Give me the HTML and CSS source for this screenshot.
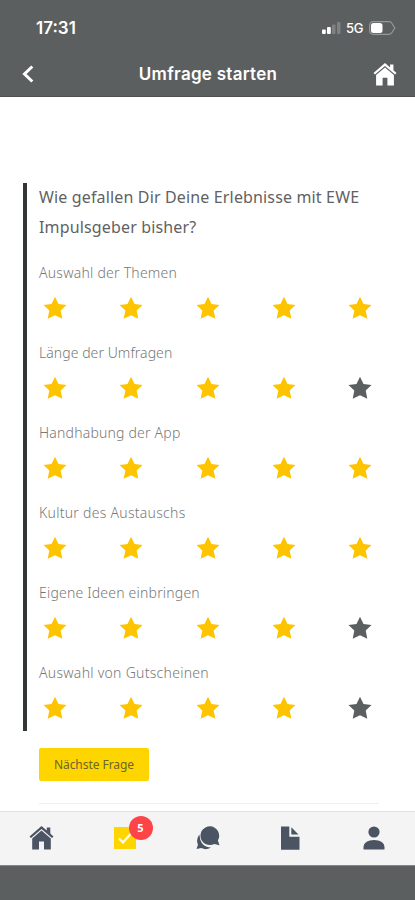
FILE: index.html
```html
<!DOCTYPE html>
<html lang="de">
<head>
<meta charset="utf-8">
<meta name="viewport" content="width=device-width, initial-scale=1">
<title>Umfrage starten</title>
<link rel="stylesheet" href="styles.css">
</head>
<body>
<svg class="defs" aria-hidden="true">
  <symbol id="star" viewBox="0 0 24 24"><path d="M12 .7l3.500 7.200 8 1.100-5.800 5.500 1.600 8.300L12 19.200l-7.300 3.600 1.600-8.300L.5 9l8-1.100z"/></symbol>
  <symbol id="home" viewBox="0 0 24 24"><path d="M12 0L0 10.400l1.500 1.700L12 3.100l10.500 9 1.500-1.700-3.200-2.800V1.500h-3.500v3.100z"/><path d="M12 4.600L2.700 12.600V23.500H9.500V15.500h5v8h6.800V12.600z"/></symbol>
</svg>
<div class="app">
  <header class="top">
    <div class="status">
      <span class="time">17:31</span>
      <span class="signals">
        <svg width="19" height="12" viewBox="0 0 19 12" fill="#fff"><rect x="0" y="7.500" width="3.800" height="4.500" rx="1"/><rect x="5" y="5" width="3.800" height="7" rx="1"/><rect x="10" y="2.500" width="3.500" height="9.500" rx="1" opacity=".22"/><rect x="15" y="0" width="3.500" height="12" rx="1" opacity=".22"/></svg>
        <span class="net">5G</span>
        <svg width="27" height="14" viewBox="0 0 27 14"><path d="M4.500.7h15.500q2 0 3 1.800L25.800 7 23 11.500q-1 1.800-3 1.800H4.500Q.7 13.300.7 9.500v-5Q.7.7 4.500.7z" fill="none" stroke="#969999" stroke-width="1.200"/><rect x="2" y="2" width="11.500" height="10" rx="2.500" fill="#fff"/></svg>
      </span>
    </div>
    <div class="nav">
      <svg class="back" width="12" height="18" viewBox="0 0 12 18"><path d="M10.300 1.500L2.500 9l7.800 7.500" fill="none" stroke="#fff" stroke-width="3"/></svg>
      <h1>Umfrage starten</h1>
      <svg class="home" width="24" height="23"><use href="#home"/></svg>
    </div>
  </header>
  <main>
    <section class="survey">
      <h2>Wie gefallen Dir Deine Erlebnisse mit EWE<br>Impulsgeber bisher?</h2>
      <div class="question"><p class="q1">Auswahl der Themen</p><div class="stars"><svg><use href="#star"/></svg><svg><use href="#star"/></svg><svg><use href="#star"/></svg><svg><use href="#star"/></svg><svg><use href="#star"/></svg></div></div>
      <div class="question"><p class="q2">Länge der Umfragen</p><div class="stars"><svg><use href="#star"/></svg><svg><use href="#star"/></svg><svg><use href="#star"/></svg><svg><use href="#star"/></svg><svg class="off"><use href="#star"/></svg></div></div>
      <div class="question"><p class="q3">Handhabung der App</p><div class="stars"><svg><use href="#star"/></svg><svg><use href="#star"/></svg><svg><use href="#star"/></svg><svg><use href="#star"/></svg><svg><use href="#star"/></svg></div></div>
      <div class="question"><p class="q4">Kultur des Austauschs</p><div class="stars"><svg><use href="#star"/></svg><svg><use href="#star"/></svg><svg><use href="#star"/></svg><svg><use href="#star"/></svg><svg><use href="#star"/></svg></div></div>
      <div class="question"><p class="q5">Eigene Ideen einbringen</p><div class="stars"><svg><use href="#star"/></svg><svg><use href="#star"/></svg><svg><use href="#star"/></svg><svg><use href="#star"/></svg><svg class="off"><use href="#star"/></svg></div></div>
      <div class="question"><p class="q6">Auswahl von Gutscheinen</p><div class="stars"><svg><use href="#star"/></svg><svg><use href="#star"/></svg><svg><use href="#star"/></svg><svg><use href="#star"/></svg><svg class="off"><use href="#star"/></svg></div></div>
    </section>
    <button class="next">Nächste Frage</button>
    <hr>
  </main>
  <nav class="tabs">
    <span><svg width="25" height="24"><use href="#home"/></svg></span>
    <span class="checks"><svg width="22" height="22" viewBox="0 0 22 22"><path fill="#ffd500" d="M0 0h22v22H0z"/><path d="M5 11.500l4 4L17 6.500" fill="none" stroke="#fff" stroke-width="2.200"/></svg><b class="badge">5</b></span>
    <span><svg width="24" height="24" viewBox="0 0 24 24"><path d="M3.500 8.500Q-.5 13 2 18.500L.5 23l4.800-1Q10 24.500 15 21.500 4 21 3.500 8.500z"/><path d="M14 .3A9.400 9.400 0 1 0 18.300 18L23.500 19.300 21.900 14.500A9.400 9.400 0 0 0 14 .3z"/></svg></span>
    <span><svg width="19" height="24" viewBox="0 0 19 24"><path d="M0 .5h8.300v10.200h10.200v13H0z"/><path d="M10.300 1.300l7.200 7.200h-7.200z"/></svg></span>
    <span><svg width="22" height="24" viewBox="0 0 22 24"><circle cx="11" cy="6" r="5.600"/><path d="M.5 23.500v-2.800Q1.500 14 11 14t10.500 6.700v2.800z"/></svg></span>
  </nav>
  <footer></footer>
</div>
</body>
</html>
```
FILE: styles.css
```css
* { box-sizing: border-box; }
body { margin: 0; background: #fff; font-family: "Noto Sans", "Open Sans", sans-serif; }
svg { display: block; flex: none; }
.defs { display: none; }
.app { display: flex; flex-direction: column; width: 415px; height: 900px; overflow: hidden; }

.top { height: 97px; background: #5b5f60; border-bottom: 1px solid #4c5051; color: #fff; font-family: Inter, sans-serif; flex: none; }
.status { display: flex; justify-content: space-between; align-items: center; height: 51px; padding: 4px 19px 0 36px; }
.time { font-size: 17px; font-weight: 600; }
.signals { display: flex; align-items: center; gap: 5px; }
.net { font-size: 13px; font-weight: 500; width: 18px; letter-spacing: -.3px; }
.nav { display: flex; align-items: center; justify-content: space-between; height: 46px; padding: 0 18px 0 22px; }
h1 { margin: 0 0 0 9px; font-size: 17px; font-weight: 600; letter-spacing: .28px; }
.home { fill: #fff; }

main { flex: 1; padding: 86px 36px 0 23px; }
.survey { display: flow-root; height: 548px; border-left: 4px solid #333637; padding-left: 12px; }
h2 { margin: -1px 0 0; font-size: 16px; line-height: 30px; font-weight: 400; letter-spacing: .15px; color: #5f6263; white-space: nowrap; }
.question { height: 80px; padding-top: 19px; }
.question p { margin: 0; line-height: 24px; font-size: 14px; font-weight: 300; color: #777; white-space: nowrap; }
.q1 { letter-spacing: .24px; }
.q2 { letter-spacing: .06px; }
.q3 { letter-spacing: .2px; }
.q4 { letter-spacing: .28px; }
.q5 { letter-spacing: .2px; }
.q6 { letter-spacing: .28px; }
.stars { display: flex; justify-content: space-between; padding: 11px 7px 0 4px; }
.stars svg { width: 24px; height: 24px; fill: #ffc400; }
.stars .off { fill: #5b5f60; }
.next { display: block; margin: 17px 0 0 16px; width: 110px; height: 33px; padding: 0; border: 0; border-radius: 2px; background: #ffd500; color: #6a662f; font: 400 12px "Noto Sans", sans-serif; letter-spacing: -.05px; }
hr { margin: 22px 0 0 16px; border: 0; border-top: 1px solid #f0f0f0; }

.tabs { flex: none; height: 54px; padding-bottom: 2px; background: #f4f4f4; border-top: 1px solid #e1e3df; display: grid; grid-template-columns: repeat(5, 1fr); align-items: center; justify-items: center; fill: #4a5462; }
.checks { position: relative; }
.badge { position: absolute; left: 15px; top: -11px; width: 24px; height: 24px; border-radius: 50%; background: #fc4449; color: #fff; font-size: 11px; line-height: 24px; text-align: center; }
footer { flex: none; height: 35px; background: #5b5f60; border-top: 1px solid #858888; }
```
